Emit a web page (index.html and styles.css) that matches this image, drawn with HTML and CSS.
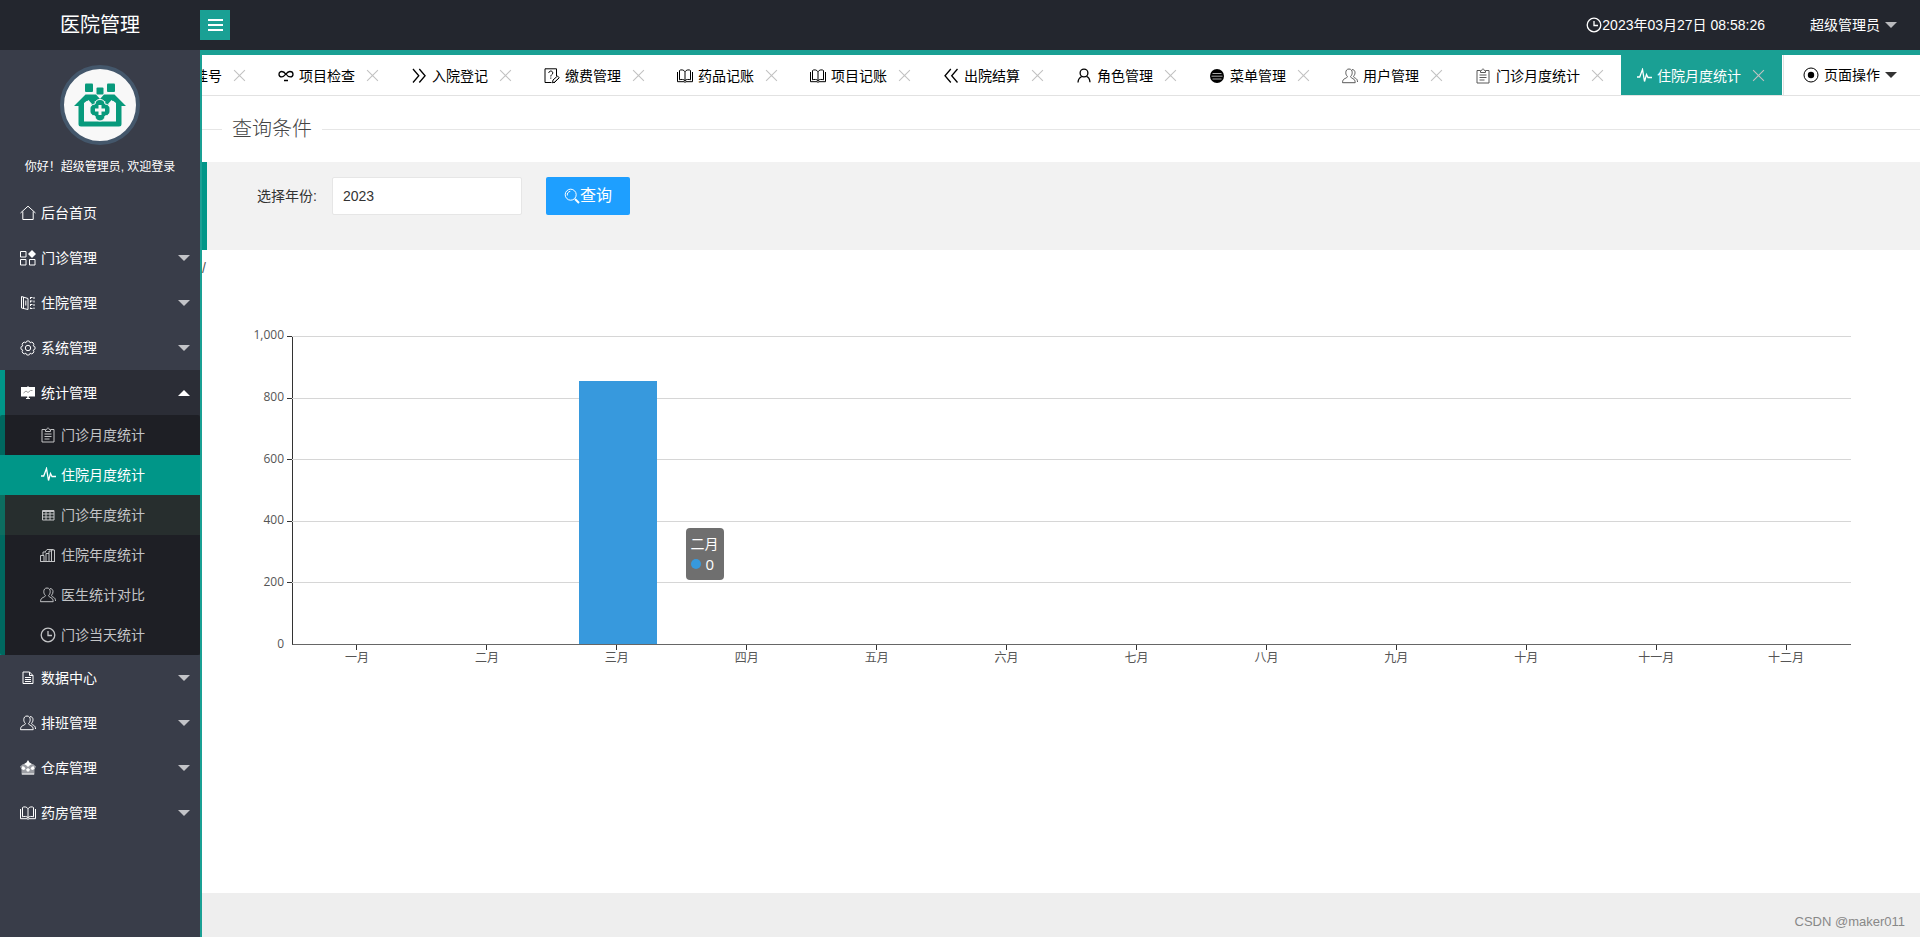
FILE: index.html
```html
<!DOCTYPE html>
<html lang="zh-CN">
<head>
<meta charset="utf-8">
<title>医院管理</title>
<link rel="stylesheet" href="styles.css">
</head>
<body>
<svg class="sprite" aria-hidden="true">
  <symbol id="home" viewBox="0 0 16 16"><path d="M.5 8 8 1.200l7.500 6.800M2.800 6.500v8h10.400v-8"/></symbol>
  <symbol id="modules" viewBox="0 0 16 16"><path d="M.5 1.500H6V7H.5zM.5 9.500H6V15H.5zM9.500 9.500H15V15H9.500z"/><path class="fill" d="M12 0l4 4-4 4-4-4z"/></symbol>
  <symbol id="ward" viewBox="0 0 16 16"><path d="M1.500 1.500V13l6.500 1.500V3.500zM3.500 2v11.500M5.800 5.500v5"/><path stroke-dasharray="2 1.500" d="M10.500 2v12M14 2v12M10.500 2.500H14M10.500 6H14M10.500 9.500H14M10.500 13.500H14"/></symbol>
  <symbol id="gear" viewBox="0 0 16 16"><circle cx="8" cy="8" r="2.700"/><path d="M13.200 5.850A2.160 2.160 0 0 1 13.200 10.150 2.160 2.160 0 0 1 10.150 13.200 2.160 2.160 0 0 1 5.850 13.200 2.160 2.160 0 0 1 2.800 10.150 2.160 2.160 0 0 1 2.800 5.850 2.160 2.160 0 0 1 5.850 2.800 2.160 2.160 0 0 1 10.150 2.800 2.160 2.160 0 0 1 13.200 5.850z"/></symbol>
  <symbol id="board" viewBox="0 0 16 16"><path class="fill" d="M1 2h6.500V1h1v1H15v9.500H8.800v1.500H10v1H6v-1h1.200v-1.500H1z"/><path class="cut" d="m3.500 8 2.500-2 2 1.500 2.500-2h2"/></symbol>
  <symbol id="clip" viewBox="0 0 16 16"><path d="M5 2.500H2v12.500h12V2.500h-3M5.500 4.500v-2h1.200C7 .5 9 .5 9.300 2.500h1.200v2zM4.500 7h7M4.500 9.500h7M4.500 12h5"/></symbol>
  <symbol id="pulse" viewBox="0 0 16 16"><path class="mid" d="M1 9h2.700L6.500 1.500l2 12 2-7 1.500 3h4"/></symbol>
  <symbol id="table" viewBox="0 0 16 16"><path d="M2.500 3.500h11.500v9.500H2.500zM2.500 4.500h11.500M2.500 7h11.500M2.500 10h11.500M6 3.500V13M10 3.500V13"/></symbol>
  <symbol id="bars" viewBox="0 0 16 16"><path d="M.5 14.500V8.500H4v6zM6 14.500v-8h3v8zM11.500 14.500V3h3v11.500zM.5 14.500h14.500M3 8.500V5h3M5 5l2-2.500h6.500M9 6.500V4h2.500"/></symbol>
  <symbol id="users" viewBox="0 0 16 16"><path d="M7 1C4.800 1 3.800 2.600 3.800 4.700c0 1.600.6 2.800 1.600 3.700-.2 1.200-1 1.500-2.600 2.200C1.200 11.400.6 12.500.5 14.700h12.700c-.1-2.200-.7-3.300-2.300-4.100C9.500 10 8.800 9.600 8.600 8.400c1-.9 1.600-2.100 1.600-3.700C10.200 2.600 9.200 1 7 1zM10 1.600c2 0 3 1.200 3 3.100 0 1.500-.6 2.700-1.500 3.500.2 1.100.8 1.500 2 2.100 1.400.7 2 1.700 2 3.700"/></symbol>
  <symbol id="clock" viewBox="0 0 16 16"><circle class="mid" cx="8" cy="8" r="6.800"/><path class="mid" d="M8 4v4.500h4"/></symbol>
  <symbol id="file" viewBox="0 0 16 16"><path d="M3 2h6.500L13 5.500V13.500H3zM9.500 2v3.500H13M5 7.500h6M5 9.500h6M5 11.500h6"/></symbol>
  <symbol id="store" viewBox="0 0 16 16"><path class="soft" d="M0 6.500 3 4h10l3 2.500-1.500 3V14.500h-13V9.500z"/><path class="fill" d="m8 0 1.500 2.500L12 4 9.500 5.500 8 7 6.500 5.500 4 4l2.500-1.500zM2.500 6l2 1 1 2-2 1-2-1zM8 8l2 1.500-1 2H7l-1-2zM13.500 6l1 3-2 1-2-1 1-2z"/><path d="M2 14h12"/></symbol>
  <symbol id="book" viewBox="0 0 16 16"><path d="M8 3.800C7 1.500 3.500 1.500 2.500 2.500v9.300c1.500-.6 4.500-.6 5.500.9 1-1.500 4-1.500 5.500-.9V2.500C12.500 1.500 9 1.500 8 3.800zM8 3.800v9M.5 4v9.700h6.500l1 .6 1-.6h6.500V4"/></symbol>
  <symbol id="link" viewBox="0 0 16 16"><path class="mid" d="M8 6.500C6.800 4.500 5.500 3.500 3.800 3.500 2.200 3.500 1 4.700 1 6.200c0 1.600 1.200 2.700 2.800 2.700 3.200 0 4.400-5.400 8-5.400 1.800 0 3.200 1 3.200 2.700 0 1.500-1.200 2.700-2.800 2.700-1.700 0-3-1-4.200-2.900M6 12.500h4"/></symbol>
  <symbol id="right" viewBox="0 0 16 16"><path class="mid" d="m2 1 5.800 6.800L2 14.500M8.300 1l5.800 6.800-5.800 6.700"/></symbol>
  <symbol id="left" viewBox="0 0 16 16"><path class="mid" d="M7.800 1 2 7.800l5.800 6.700M14.500 1 8.700 7.800l5.800 6.700"/></symbol>
  <symbol id="survey" viewBox="0 0 16 16"><path d="M12.500 8V.8H1v13.700h6.500M4.800 5c0-2.600 4-2.600 4 0 0 1.500-2 1.500-2 3.500M6.800 9.500v1.200M8.500 14.800l.5-2.800 4.500-4 1.700 1.800-4.500 4.200zM10 15l5-5"/></symbol>
  <symbol id="person" viewBox="0 0 16 16"><circle class="mid" cx="8" cy="5" r="3.900"/><path class="mid" d="M2 14.500c.2-3 1.600-5 3.800-6M10.500 8.300c2 .7 3.300 2.500 3.500 6"/></symbol>
  <symbol id="menu" viewBox="0 0 16 16"><circle class="fill" cx="8" cy="8" r="7"/><path class="lines" d="M3.500 5.500h9M2.500 8.200h11M3.500 11h9"/></symbol>
  <symbol id="radio" viewBox="0 0 16 16"><circle cx="8" cy="8" r="7"/><circle class="fill" cx="8" cy="8" r="3.200"/></symbol>
  <symbol id="search" viewBox="0 0 16 16"><circle cx="6.700" cy="6.700" r="5.500"/><path d="M3.300 7.500c-.4-2 1-4 3-4.200"/><path class="bold" d="m11 11 4 4"/></symbol>
  <symbol id="close" viewBox="0 0 12 12"><path d="m1 1 10 10M11 1 1 11"/></symbol>
</svg>

<header class="header">
  <div class="logo">医院管理</div>
  <button class="toggle" type="button" aria-label="折叠菜单"><span></span><span></span><span></span></button>
  <div class="header-right">
    <time class="clock"><svg class="icon"><use href="#clock"/></svg>2023年03月27日 08:58:26</time>
    <button class="user" type="button">超级管理员<i class="caret"></i></button>
  </div>
</header>

<div class="layout">
  <aside class="side">
    <div class="profile">
      <svg class="avatar" viewBox="60 65 80 80" role="img" aria-label="头像">
        <circle cx="100" cy="105" r="38" fill="#f8f8f8" stroke="#44576b" stroke-width="4"/>
        <g fill="#089a7c">
          <rect x="85" y="83.500" width="8" height="8.500" rx="1"/>
          <rect x="96.500" y="87.500" width="7" height="7" rx="1"/>
          <rect x="107" y="83.500" width="8" height="8.500" rx="1"/>
          <path d="M74 106 85.500 94.500H96l4 4.500 4-4.500h10.500L126 106h-4.500v18q0 2.500-2.500 2.500H81q-2.500 0-2.500-2.500v-18zM84 103v18.500h32V103l-4-3-4 3-8-4-8 4-4-3z" fill-rule="evenodd"/>
          <path d="m88 98 14 9-3 4-13-11zM112 98l-14 9 3 4 13-11z"/>
        </g>
        <path d="M84.500 103.500 88.500 100l3.500 4-3 4v13h-4.500zM115.500 103.500l-4-3.500-3.500 4 3 4v13h4.500z" fill="#f8f8f8"/>
        <path d="M100 99.500a5 5 0 0 1 5 4.500 5 5 0 0 1 5 6 5 5 0 0 1-5 6 5 5 0 0 1-5 5 5 5 0 0 1-5-5 5 5 0 0 1-5-6 5 5 0 0 1 5-6 5 5 0 0 1 5-4.500z" fill="#089a7c" stroke="#f8f8f8"/>
        <path d="M98.500 105h3v3.500h3.500v3h-3.500v3.500h-3v-3.500H95v-3h3.500z" fill="#f8f8f8"/>
      </svg>
      <p class="greeting">你好！超级管理员, 欢迎登录</p>
    </div>
    <nav>
      <ul class="menu">
        <li><a href="#"><svg class="icon"><use href="#home"/></svg>后台首页</a></li>
        <li><a href="#"><svg class="icon"><use href="#modules"/></svg>门诊管理<i class="caret"></i></a></li>
        <li><a href="#"><svg class="icon"><use href="#ward"/></svg>住院管理<i class="caret"></i></a></li>
        <li><a href="#"><svg class="icon"><use href="#gear"/></svg>系统管理<i class="caret"></i></a></li>
        <li class="open">
          <a href="#"><svg class="icon"><use href="#board"/></svg>统计管理<i class="caret up"></i></a>
          <ul class="submenu">
            <li><a href="#"><svg class="icon"><use href="#clip"/></svg>门诊月度统计</a></li>
            <li><a class="current" href="#"><svg class="icon"><use href="#pulse"/></svg>住院月度统计</a></li>
            <li><a class="hovered" href="#"><svg class="icon"><use href="#table"/></svg>门诊年度统计</a></li>
            <li><a href="#"><svg class="icon"><use href="#bars"/></svg>住院年度统计</a></li>
            <li><a href="#"><svg class="icon"><use href="#users"/></svg>医生统计对比</a></li>
            <li><a href="#"><svg class="icon"><use href="#clock"/></svg>门诊当天统计</a></li>
          </ul>
        </li>
        <li><a href="#"><svg class="icon"><use href="#file"/></svg>数据中心<i class="caret"></i></a></li>
        <li><a href="#"><svg class="icon"><use href="#users"/></svg>排班管理<i class="caret"></i></a></li>
        <li><a href="#"><svg class="icon"><use href="#store"/></svg>仓库管理<i class="caret"></i></a></li>
        <li><a href="#"><svg class="icon"><use href="#book"/></svg>药房管理<i class="caret"></i></a></li>
      </ul>
    </nav>
  </aside>

  <div class="body">
    <div class="tabbar">
      <ul class="tabs">
        <li class="tab"><a href="#">挂号</a><button type="button" aria-label="关闭"><svg><use href="#close"/></svg></button></li>
        <li class="tab"><a href="#"><svg class="icon"><use href="#link"/></svg>项目检查</a><button type="button" aria-label="关闭"><svg><use href="#close"/></svg></button></li>
        <li class="tab"><a href="#"><svg class="icon"><use href="#right"/></svg>入院登记</a><button type="button" aria-label="关闭"><svg><use href="#close"/></svg></button></li>
        <li class="tab"><a href="#"><svg class="icon"><use href="#survey"/></svg>缴费管理</a><button type="button" aria-label="关闭"><svg><use href="#close"/></svg></button></li>
        <li class="tab"><a href="#"><svg class="icon"><use href="#book"/></svg>药品记账</a><button type="button" aria-label="关闭"><svg><use href="#close"/></svg></button></li>
        <li class="tab"><a href="#"><svg class="icon"><use href="#book"/></svg>项目记账</a><button type="button" aria-label="关闭"><svg><use href="#close"/></svg></button></li>
        <li class="tab"><a href="#"><svg class="icon"><use href="#left"/></svg>出院结算</a><button type="button" aria-label="关闭"><svg><use href="#close"/></svg></button></li>
        <li class="tab"><a href="#"><svg class="icon"><use href="#person"/></svg>角色管理</a><button type="button" aria-label="关闭"><svg><use href="#close"/></svg></button></li>
        <li class="tab"><a href="#"><svg class="icon"><use href="#menu"/></svg>菜单管理</a><button type="button" aria-label="关闭"><svg><use href="#close"/></svg></button></li>
        <li class="tab"><a href="#"><svg class="icon faint"><use href="#users"/></svg>用户管理</a><button type="button" aria-label="关闭"><svg><use href="#close"/></svg></button></li>
        <li class="tab"><a href="#"><svg class="icon faint"><use href="#clip"/></svg>门诊月度统计</a><button type="button" aria-label="关闭"><svg><use href="#close"/></svg></button></li>
        <li class="tab active"><a href="#"><svg class="icon"><use href="#pulse"/></svg>住院月度统计</a><button type="button" aria-label="关闭"><svg><use href="#close"/></svg></button></li>
      </ul>
      <button class="page-ops" type="button"><svg class="icon"><use href="#radio"/></svg>页面操作<i class="caret"></i></button>
    </div>

    <main class="content">
      <h1 class="section-title">查询条件</h1>
      <form class="query">
        <label for="year">选择年份:</label>
        <input id="year" type="text" value="2023">
        <button type="button"><svg class="icon"><use href="#search"/></svg>查询</button>
      </form>
      <div class="stray">/</div>

      <div class="chart">
        <div class="y-axis"><span>1,000</span><span>800</span><span>600</span><span>400</span><span>200</span><span>0</span></div>
        <div class="plot">
          <div class="grid-lines"><i></i><i></i><i></i><i></i><i></i></div>
          <div class="columns">
            <i></i><i></i><i><b style="height:85.400%"></b></i><i></i><i></i><i></i><i></i><i></i><i></i><i></i><i></i><i></i>
          </div>
          <div class="tooltip"><div>二月</div><div class="value"><i></i>0</div></div>
        </div>
        <div class="x-axis"><span>一月</span><span>二月</span><span>三月</span><span>四月</span><span>五月</span><span>六月</span><span>七月</span><span>八月</span><span>九月</span><span>十月</span><span>十一月</span><span>十二月</span></div>
      </div>
    </main>
    <footer class="footer">CSDN @maker011</footer>
  </div>
</div>
</body>
</html>
```
FILE: styles.css
```css
* { box-sizing: border-box; }

body {
  margin: 0;
  min-height: 100vh;
  display: flex;
  flex-direction: column;
  font: 14px/20px "Liberation Sans", "Noto Sans CJK SC", sans-serif;
  color: #333;
  background: #fff;
}

ul, h1, p { margin: 0; padding: 0; list-style: none; }
a { color: inherit; text-decoration: none; }
button {
  border: 0;
  padding: 0;
  background: none;
  font: inherit;
  color: inherit;
  cursor: pointer;
}

/* Icons */
.sprite { display: none; }
.icon {
  width: 16px;
  height: 16px;
  flex: none;
  fill: none;
  stroke: currentColor;
  stroke-width: 1;
}
.icon.faint { opacity: .65; }
.fill { fill: currentColor; stroke: none; }
.soft { fill: currentColor; stroke: none; opacity: .5; }
.mid { stroke-width: 1.3; }
.bold { stroke-width: 2; }
.cut { stroke: #999; }
.lines { stroke: #aaa; }
.caret {
  border: 6px solid transparent;
  border-top-color: currentColor;
  border-bottom-width: 0;
}
.caret.up {
  border-top-width: 0;
  border-bottom: 6px solid currentColor;
}

/* Header */
.header {
  display: flex;
  align-items: center;
  height: 50px;
  background: #23262e;
  color: #fff;
}
.logo {
  width: 200px;
  text-align: center;
  font-size: 20px;
  line-height: 50px;
}
.toggle {
  width: 30px;
  height: 30px;
  display: flex;
  flex-direction: column;
  align-items: center;
  justify-content: center;
  gap: 3px;
  background: #1aa094;
}
.toggle span { width: 15px; height: 2px; background: #fff; }
.header-right {
  display: flex;
  align-items: center;
  gap: 45px;
  margin-left: auto;
  padding-right: 23px;
}
.clock { display: flex; align-items: center; }
.user { display: flex; align-items: center; gap: 5px; }
.user .caret { color: #b9babd; }

/* Sidebar */
.layout { flex: 1; display: flex; }
.side {
  width: 200px;
  flex: none;
  background: #393d49;
  color: #fff;
}
.profile {
  height: 140px;
  padding-top: 15px;
  text-align: center;
}
.avatar { display: block; width: 80px; height: 80px; margin: 0 auto; }
.greeting { margin-top: 12px; font-size: 12px; }
.menu a {
  display: flex;
  align-items: center;
  gap: 5px;
  height: 45px;
  padding: 0 10px 0 20px;
}
.menu .caret { margin-left: auto; color: #c3c4c8; }
.menu .caret.up { color: #fff; }
.open { background: linear-gradient(to right, #009688 5px, #2b2d36 5px); }
.submenu { background: rgba(0, 0, 0, .3); border-radius: 2px; color: #c3c4c6; }
.submenu a { height: 40px; padding-left: 40px; }
.submenu .current { background: #009688; color: #fff; }
.submenu .hovered { background: rgba(100, 150, 110, .13); }

/* Tabs */
.body {
  flex: 1;
  min-width: 0;
  display: flex;
  flex-direction: column;
  border-top: 5px solid #1aa094;
  border-left: 2px solid #1aa094;
}
.tabbar { display: flex; height: 41px; border-bottom: 1px solid #e2e2e2; color: #000; }
.tabs {
  flex: 1;
  min-width: 0;
  display: flex;
  justify-content: flex-end;
  overflow: hidden;
}
.tab {
  display: flex;
  flex: none;
  align-items: center;
  gap: 11px;
  height: 41px;
  padding: 0 17px 0 15px;
}
.tab a { display: flex; align-items: center; gap: 5px; }
.tab button { width: 13px; height: 13px; display: flex; }
.tab button svg { width: 13px; height: 13px; stroke: #c2c2c2; }
.tab.active { background: #1aa094; color: #fff; }
.page-ops {
  display: flex;
  align-items: center;
  gap: 5px;
  margin-left: 1px;
  padding: 0 23px 0 19px;
  border-left: 1px solid #e2e2e2;
}
.page-ops .caret { color: #333; }

/* Query form */
.content { flex: 1; display: flex; flex-direction: column; }
.section-title {
  display: flex;
  align-items: center;
  gap: 10px;
  height: 66px;
  font-size: 20px;
  line-height: 24px;
  font-weight: 300;
  color: #444;
}
.section-title::before, .section-title::after {
  content: "";
  width: 20px;
  height: 1px;
  background: #e6e6e6;
}
.section-title::after { flex: 1; }
.query {
  display: flex;
  align-items: flex-start;
  height: 88px;
  padding: 15px 15px 15px 50px;
  border-left: 5px solid #009688;
  background: #f2f2f2;
}
.query label { width: 75px; line-height: 38px; }
.query input {
  width: 190px;
  height: 38px;
  padding: 0 10px;
  border: 1px solid #e6e6e6;
  border-radius: 2px;
  font: inherit;
  color: #333;
  background: #fff;
}
.query button {
  display: flex;
  align-items: center;
  justify-content: center;
  width: 84px;
  height: 38px;
  margin-left: 24px;
  border-radius: 2px;
  background: #1e9fff;
  color: #fff;
  font-size: 16px;
}
.stray { padding-top: 8px; color: #555; }

/* Chart */
.chart {
  display: grid;
  grid-template-columns: 90px 1fr;
  padding: 58px 69px 0 0;
  font: 12px/12px "Open Sans", "Noto Sans CJK SC", sans-serif;
  color: #555;
}
.y-axis {
  display: flex;
  flex-direction: column;
  justify-content: space-between;
  margin: -7px 0 -5px;
  padding-right: 8px;
  text-align: right;
}
.plot {
  display: grid;
  position: relative;
  height: 309px;
  border-left: 1px solid #333;
  border-bottom: 1px solid #666;
}
.grid-lines, .columns { grid-area: 1 / 1; display: flex; }
.grid-lines { flex-direction: column; margin-left: -6px; }
.grid-lines i {
  flex: 1;
  border-top: 1px solid;
  border-image: linear-gradient(to right, #333 6px, #d6d6d6 6px) 1;
}
.columns i { flex: 1; display: flex; align-items: flex-end; justify-content: center; }
.columns b { width: 60%; background: #3799dd; }
.tooltip {
  position: absolute;
  left: 25.200%;
  top: 62.200%;
  padding: 5px;
  border-radius: 4px;
  background: rgba(50, 50, 50, .7);
  color: #fff;
  font-size: 14px;
  line-height: 21px;
}
.tooltip .value { display: flex; align-items: center; gap: 5px; font-size: 15px; }
.tooltip i { width: 10px; height: 10px; border-radius: 50%; background: #3799dd; }
.x-axis { grid-column: 2; display: flex; }
.x-axis span { flex: 1; text-align: center; }
.x-axis span::before {
  content: "";
  display: block;
  width: 1px;
  height: 5px;
  margin: 0 auto 2px;
  background: #333;
}

.footer {
  height: 44px;
  padding: 19px 15px 0 0;
  background: #eee;
  color: #888;
  font-size: 13px;
  text-align: right;
}
```
